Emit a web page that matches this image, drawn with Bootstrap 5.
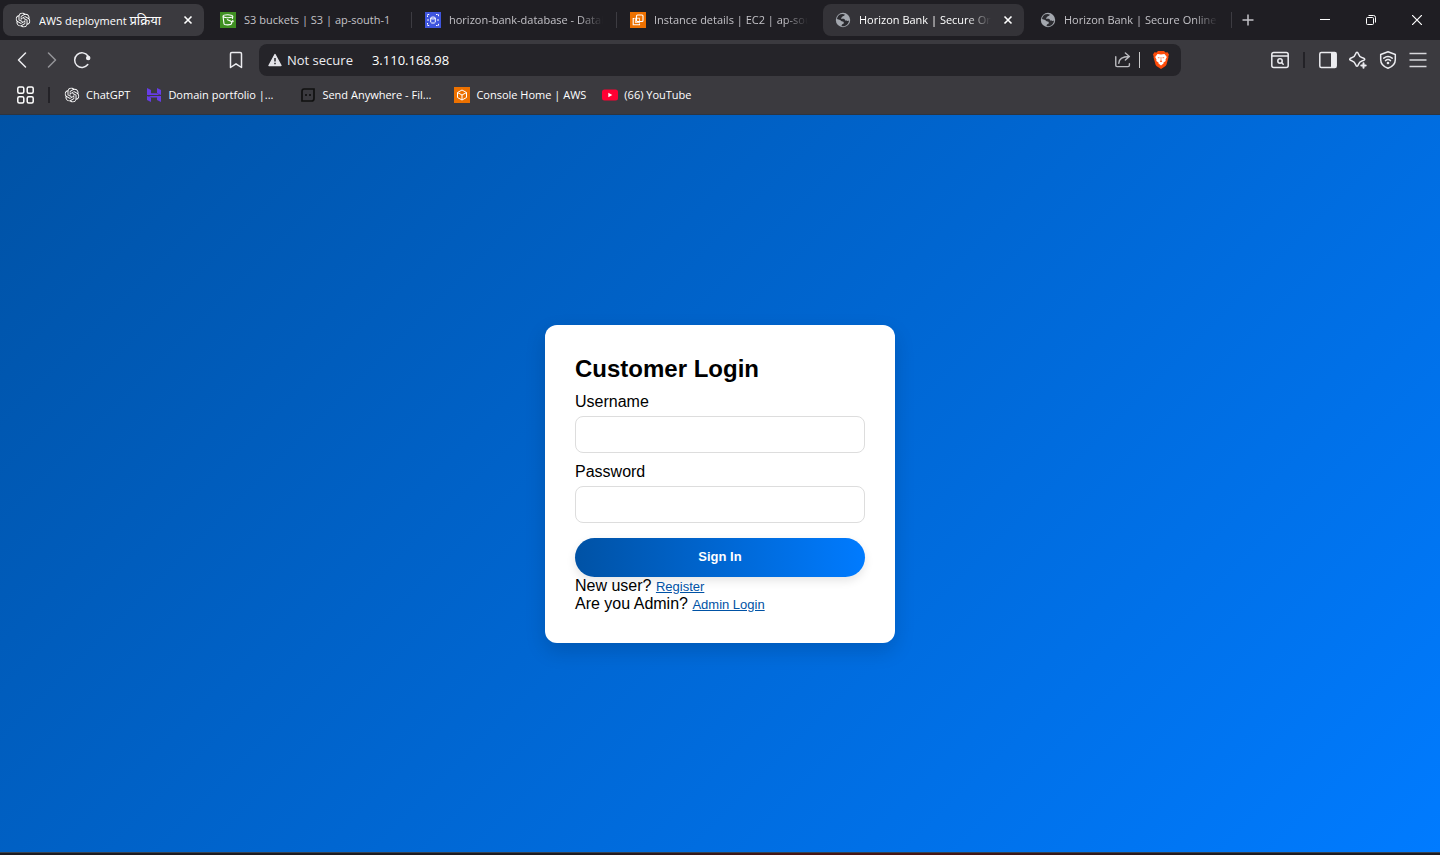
<!DOCTYPE html>
<html lang="en">
<head>
<meta charset="utf-8">
<meta name="viewport" content="width=device-width, initial-scale=1">
<title>Horizon Bank | Secure Online Banking</title>
<link href="https://cdn.jsdelivr.net/npm/bootstrap@5.3.0/dist/css/bootstrap.min.css" rel="stylesheet">
<style>
  body { font-family: "Open Sans", "Noto Sans", "Noto Sans Devanagari", sans-serif; font-size: 11px; line-height: 16px; color: #fff; background: #3b3a3f; }
  button.plain { border: 0; padding: 0; background: none; color: inherit; }
  svg { display: block; flex: none; }
  .line-icon { fill: none; stroke: currentColor; stroke-width: 1.5; stroke-linecap: round; stroke-linejoin: round; }

  .tab-strip { height: 40px; background: #1f1e23; padding-left: 3px; }
  .tab-item { flex: 0 1 201px; min-width: 0; height: 32px; margin: 4px 4px 4px 0; padding: 0 11px 0 12px; border-radius: 8px; color: #c3c2c7; position: relative; }
  .tab-item.lit { background: #3b3a3f; color: #fff; }
  .tab-item.dim-lit { background: #343338; color: #fff; }
  .tab-item.ruled::after { content: ""; position: absolute; right: -3px; top: 8px; width: 1px; height: 16px; background: #3d3c42; }
  .tab-title { white-space: nowrap; overflow: hidden; text-align: left; }
  .tab-title .hindi { font-size: 13px; }
  .faded { -webkit-mask-image: linear-gradient(to right, #000 calc(100% - 24px), transparent); mask-image: linear-gradient(to right, #000 calc(100% - 24px), transparent); }
  .win-btn { width: 46px; height: 40px; }

  .tool-bar { height: 40px; color: #ececf0; }
  .tool-left, .tool-right { flex: 0 0 259px; }
  .tool-left { padding: 0 8px 0 7px; }
  .tool-right { padding-right: 7px; }
  .tool-btn { width: 30px; height: 32px; }
  .rule { width: 2px; height: 16px; background: #232227; }
  .address { height: 32px; border-radius: 8px; background: #252429; padding: 0 12px 0 9px; font-size: 13px; }
  .address label { margin-left: 5px; }
  .address input { border: 0; background: none; color: #fff; outline: 0; padding: 0; min-width: 0; margin-left: 19px; }
  .bookmark-bar { height: 35px; padding: 0 17px 4px; border-bottom: 1px solid #2c3440; }
  .bookmark-bar .rule { margin: 0 14px; }
  .bookmark-bar a { color: #fff; white-space: nowrap; gap: 6px; }
  .bm-fixed { width: 138px; }

  .login-page { background: linear-gradient(135deg, #0052a5, #007bff); font-family: "Liberation Sans", Arial, sans-serif; font-size: 16px; line-height: 18px; color: #000; }
  .login-card { width: 350px; padding: 30px; border-radius: 12px; background: #fff; box-shadow: 0 8px 20px rgba(0, 0, 0, .15); }
  .login-card h2 { font-size: 24px; line-height: 28px; font-weight: 700; margin: 0 0 10px; }
  .login-card label { display: block; }
  .login-card .form-control { height: 37px; margin: 5px 0 10px; border: 1px solid #ddd; border-radius: 8px; }
  .login-card .sign-in { height: 39px; margin-top: 5px; padding: 0; border: 0; font-size: 13px; font-weight: 700; color: #fff; background: linear-gradient(to right, #0052a5, #007bff); box-shadow: 0 4px 10px rgba(0, 0, 0, .1); }
  .login-card a { font-size: 13px; line-height: 1; color: #0052a5; }
  .task-edge { height: 3px; background: linear-gradient(to right, #1c1c22 40%, #451616 55%, #451616 65%, #1c1c22 85%); border-top: 1px solid #38424e; }
</style>
</head>
<body class="d-flex flex-column min-vh-100">

<svg width="0" height="0" class="position-absolute" aria-hidden="true">
  <symbol id="knot" viewBox="0 0 24 24"><path fill="currentColor" d="M22.2819 9.8211a5.9847 5.9847 0 0 0-.5157-4.9108 6.0462 6.0462 0 0 0-6.5098-2.9A6.0651 6.0651 0 0 0 4.9807 4.1818a5.9847 5.9847 0 0 0-3.9977 2.9 6.0462 6.0462 0 0 0 .7427 7.0966 5.98 5.98 0 0 0 .511 4.9107 6.051 6.051 0 0 0 6.5146 2.9001A5.9847 5.9847 0 0 0 13.2599 24a6.0557 6.0557 0 0 0 5.7718-4.2058 5.9894 5.9894 0 0 0 3.9977-2.9001 6.0557 6.0557 0 0 0-.7475-7.0729zm-9.022 12.6081a4.4755 4.4755 0 0 1-2.8764-1.0408l.1419-.0804 4.7783-2.7582a.7948.7948 0 0 0 .3927-.6813v-6.7369l2.02 1.1686a.071.071 0 0 1 .038.052v5.5826a4.504 4.504 0 0 1-4.4945 4.4944zm-9.6607-4.1254a4.4708 4.4708 0 0 1-.5346-3.0137l.142.0852 4.783 2.7582a.7712.7712 0 0 0 .7806 0l5.8428-3.3685v2.3324a.0804.0804 0 0 1-.0332.0615L9.74 19.9502a4.4992 4.4992 0 0 1-6.1408-1.6464zM2.3408 7.8956a4.485 4.485 0 0 1 2.3655-1.9728V11.6a.7664.7664 0 0 0 .3879.6765l5.8144 3.3543-2.0201 1.1685a.0757.0757 0 0 1-.071 0l-4.8303-2.7865A4.504 4.504 0 0 1 2.3408 7.872zm16.5963 3.8558L13.1038 8.364 15.1192 7.2a.0757.0757 0 0 1 .071 0l4.8303 2.7913a4.4944 4.4944 0 0 1-.6765 8.1042v-5.6772a.79.79 0 0 0-.407-.667zm2.0107-3.0231l-.142-.0852-4.7735-2.7818a.7759.7759 0 0 0-.7854 0L9.409 9.2297V6.8974a.0662.0662 0 0 1 .0284-.0615l4.8303-2.7866a4.4992 4.4992 0 0 1 6.6802 4.66zM8.3065 12.863l-2.02-1.1638a.0804.0804 0 0 1-.038-.0567V6.0742a4.4992 4.4992 0 0 1 7.3757-3.4537l-.142.0805L8.704 5.459a.7948.7948 0 0 0-.3927.6813zm1.0976-2.3654l2.602-1.4998 2.6069 1.4998v2.9994l-2.5974 1.4997-2.6067-1.4997Z"/></symbol>
  <symbol id="globe" viewBox="0 0 16 16"><circle cx="8" cy="8" r="7.2" fill="#a3a7ae"/><path fill="#2b2b30" d="M3 4.200C4 2.800 5.500 2.100 7.200 2c1 0 2 .2 2.600.5-.2 1.200-1 1.500-2 1.700-.6.1-.5.9-1.100 1.200-.8.3-.9.900-.3 1.400h2.200c1 0 1.300.8 1.400 1.600h1.200c.7 0 1 .5 1.600.5.5 0 .8-.3 1.300-.4-.2 2.600-2 4.700-4.300 5.400-1 .3-2.200.3-3.200 0 0-1.100.4-1.900 1.300-2 .8-.1 1-.5.9-1.300 0-.9-.6-1.100-1.400-1.200-1 0-1.500-.7-2.200-1.300L2 6.900C2.100 5.900 2.500 5 3 4.200z"/></symbol>
  <symbol id="cross" viewBox="0 0 10 10"><path d="M1.500 1.500l7 7M8.500 1.500l-7 7" stroke="currentColor" stroke-width="1.600" fill="none"/></symbol>
</svg>

<header>
  <div class="tab-strip d-flex">
    <div class="tab-item lit d-flex align-items-center gap-2">
      <svg width="16" height="16" viewBox="-1 -1 26 26"><use href="#knot" width="24" height="24"/></svg>
      <button class="plain tab-title flex-grow-1">AWS deployment <span class="hindi" lang="hi">प्रक्रिया</span></button>
      <button class="plain" aria-label="Close tab"><svg width="10" height="10"><use href="#cross"/></svg></button>
    </div>
    <div class="tab-item ruled d-flex align-items-center gap-2">
      <svg width="16" height="16" viewBox="0 0 16 16"><rect width="16" height="16" fill="#3f8f22"/><g fill="none" stroke="#fff" stroke-width="1.100"><path d="M3 4.300l1 7.400c.2 1.600 7.200 1.600 7.500 0l.4-2.200M3 4.300c0-2 9.800-2 9.800 0l-.4 2.500M3 4.300c1 1.600 6 2 9.500.7"/><path d="M7 7.500l5 2.200c1.500.5 1.400-.8.3-1.500"/></g></svg>
      <button class="plain tab-title flex-grow-1">S3 buckets | S3 | ap-south-1</button>
    </div>
    <div class="tab-item ruled d-flex align-items-center gap-2">
      <svg width="16" height="16" viewBox="0 0 16 16"><rect width="16" height="16" fill="#3f55dd"/><g fill="none" stroke="#fff"><path d="M2.500 5V2.500H5M11 2.500h2.500V5M2.500 11v2.500H5M11 13.500h2.500V11" stroke-dasharray="1.600 .8"/><ellipse cx="8" cy="6" rx="2.300" ry="1"/><path d="M5.700 6v4.200c0 1.200 4.600 1.200 4.600 0V6M2 8h2M12 8h2"/></g></svg>
      <button class="plain tab-title faded flex-grow-1">horizon-bank-database - Databases</button>
    </div>
    <div class="tab-item d-flex align-items-center gap-2">
      <svg width="16" height="16" viewBox="0 0 16 16"><rect width="16" height="16" fill="#ed7100"/><g fill="none" stroke="#fff" stroke-width="1.100"><rect x="6.500" y="3" width="6.500" height="6.500" rx="1"/><path d="M4.500 6.500H3.200v6.300h6.300v-1.300"/><path d="M9.500 6.300H5.500v4.200h4z" opacity=".75"/></g></svg>
      <button class="plain tab-title faded flex-grow-1">Instance details | EC2 | ap-south-1</button>
    </div>
    <div class="tab-item dim-lit d-flex align-items-center gap-2">
      <svg width="16" height="16"><use href="#globe"/></svg>
      <button class="plain tab-title faded flex-grow-1">Horizon Bank | Secure Online</button>
      <button class="plain ms-1" aria-label="Close tab"><svg width="10" height="10"><use href="#cross"/></svg></button>
    </div>
    <div class="tab-item ruled d-flex align-items-center gap-2">
      <svg width="16" height="16"><use href="#globe"/></svg>
      <button class="plain tab-title faded flex-grow-1">Horizon Bank | Secure Online</button>
    </div>
    <button class="plain px-2" aria-label="New tab"><svg width="14" height="14" viewBox="0 0 14 14"><path d="M7 1.500v11M1.500 7h11" stroke="#c3c2c7" stroke-width="1.500"/></svg></button>
    <div class="d-flex ms-auto">
      <button class="plain win-btn d-flex align-items-center justify-content-center" aria-label="Minimize"><svg width="10" height="10" viewBox="0 0 10 10"><path d="M0 4.500h10" stroke="#fff"/></svg></button>
      <button class="plain win-btn d-flex align-items-center justify-content-center" aria-label="Restore"><svg width="10" height="10" viewBox="0 0 10 10" fill="none" stroke="#fff"><rect x=".5" y="2.500" width="7" height="7" rx="1"/><path d="M2.500.5h5a2 2 0 0 1 2 2v5"/></svg></button>
      <button class="plain win-btn d-flex align-items-center justify-content-center" aria-label="Close"><svg width="10" height="10" viewBox="0 0 10 10"><path d="M0 0l10 10M10 0L0 10" stroke="#fff" stroke-width="1.200"/></svg></button>
    </div>
  </div>

  <div class="tool-bar d-flex align-items-center">
    <div class="tool-left d-flex">
      <button class="plain tool-btn d-flex align-items-center justify-content-center" aria-label="Back"><svg class="line-icon" width="18" height="18" viewBox="0 0 18 18"><path d="M12.500 2L5.500 9l7 7"/></svg></button>
      <button class="plain tool-btn d-flex align-items-center justify-content-center opacity-50" aria-label="Forward"><svg class="line-icon" width="18" height="18" viewBox="0 0 18 18"><path d="M5.500 2l7 7-7 7"/></svg></button>
      <button class="plain tool-btn d-flex align-items-center justify-content-center" aria-label="Reload"><svg class="line-icon" width="18" height="18" viewBox="0 0 18 18"><path d="M14.800 13.500A7.300 7.300 0 1 1 15 5"/><circle cx="15.200" cy="7" r="1.500" fill="currentColor"/></svg></button>
      <button class="plain tool-btn d-flex align-items-center justify-content-center ms-auto" aria-label="Bookmark this page"><svg class="line-icon" width="18" height="18" viewBox="0 0 18 18"><path d="M3.500 16.500V2.800c0-.8.500-1.300 1.300-1.300h8.400c.8 0 1.300.5 1.300 1.300v13.700L9 12.800z"/></svg></button>
    </div>
    <div class="address d-flex align-items-center flex-grow-1">
      <svg width="14" height="14" viewBox="0 0 14 14"><path d="M7 1.500L13 12.500H1z" fill="#e3e3e8" stroke="#e3e3e8" stroke-width="1.400" stroke-linejoin="round"/><path d="M7 5v3.500M7 9.800v1.400" stroke="#252429" stroke-width="1.500"/></svg>
      <label for="url" class="text-nowrap">Not secure</label>
      <input id="url" type="text" class="flex-grow-1" value="3.110.168.98">
      <button class="plain" aria-label="Share"><svg class="line-icon opacity-75" width="16" height="18" viewBox="1 0 17 18"><path d="M1.800 5.500v9c0 1 .5 1.500 1.500 1.500h11.500c.9 0 1.500-.5 1.500-1.500V13M5 12.500c.2-4.500 3-7.300 11-7.300M12 1.500l4.300 3.700L12 9"/></svg></button>
      <span class="rule mx-2 opacity-75 border-start border-white"></span>
      <button class="plain ms-1" aria-label="Brave Shields"><svg width="16" height="18" viewBox="0 0 16 18"><path fill="#ff4c0a" d="M5 0h6l1.500 1.500 2-.2L16 3.500l-.7 2 .2.700-2 7.400c-.3.800-.7 1.300-1.300 1.700L8 18l-4.200-2.700c-.6-.4-1-.9-1.300-1.700l-2-7.400.2-.7-.7-2 1.500-2.200 2 .2z"/><path fill="#fff" d="M4.500 3L8 3.500l3.500-.5 2.300 3-1.300 2.500.2 1.400L10.500 11.500v1L8 14.500l-2.500-2v-1L3.300 9.900l.2-1.400L2.200 6z"/><path fill="#ff4c0a" d="M4.500 6.300l2.200.2-.7 1.100zM11.500 6.300l-2.200.2.700 1.100zM7.700 6h.6v3.500l1 .8L8 11.200l-1.300-.9 1-.8z"/></svg></button>
    </div>
    <div class="tool-right d-flex align-items-center justify-content-end">
      <button class="plain tool-btn d-flex align-items-center justify-content-center" aria-label="Search tabs"><svg class="line-icon" width="18" height="18" viewBox="0 0 18 18"><rect x=".8" y="1.500" width="16.400" height="15" rx="2"/><path d="M1 5h16"/><circle cx="9" cy="10" r="2.200"/><path d="M10.800 11.800l1.400 1.400"/></svg></button>
      <span class="rule mx-2"></span>
      <button class="plain tool-btn d-flex align-items-center justify-content-center" aria-label="Sidebar"><svg class="line-icon" width="18" height="18" viewBox="0 0 18 18"><rect x=".8" y="1.500" width="16.400" height="15" rx="1.500"/><path d="M12 2h5v14h-5z" fill="currentColor" stroke="none"/></svg></button>
      <button class="plain tool-btn d-flex align-items-center justify-content-center" aria-label="Leo AI"><svg class="line-icon" width="18" height="18" viewBox="0 0 18 18"><path d="M8 1.200c.8 0 1 .5 1.300 1.500.8 2.700 1.300 3.200 4 4 1 .3 2.500.6 2.500 1.600s-1.500 1.200-2.500 1.500c-2.700.8-3.200 1.300-4 4-.3 1-.5 1.500-1.300 1.500s-1-.5-1.300-1.500c-.8-2.700-1.300-3.200-4-4-1-.3-2-.6-2-1.500s1-1.300 2-1.600c2.700-.8 3.200-1.300 4-4C7 1.700 7.200 1.200 8 1.200z"/><path d="M14.500 12.300v4.400M12.300 14.500h4.400" stroke-width="2"/></svg></button>
      <button class="plain tool-btn d-flex align-items-center justify-content-center" aria-label="VPN"><svg class="line-icon" width="18" height="18" viewBox="0 0 18 18"><path d="M9 .8l7.300 2.700v5.200c0 4-3 7-7.300 8.600-4.300-1.600-7.300-4.600-7.300-8.600V3.500z"/><path d="M4.800 7.200c2.500-2 5.900-2 8.400 0M6.500 9.600c1.500-1.200 3.500-1.200 5 0"/><circle cx="9" cy="12" r=".6" fill="currentColor"/></svg></button>
      <button class="plain tool-btn d-flex align-items-center justify-content-center" aria-label="Menu"><svg width="18" height="18" viewBox="0 0 18 18"><path d="M.5 2.500h17M.5 9h17M.5 15.500h17" stroke="#d8d8dc" stroke-width="1.700"/></svg></button>
    </div>
  </div>

  <nav class="bookmark-bar d-flex align-items-center" aria-label="Bookmarks">
    <button class="plain" aria-label="All bookmarks"><svg class="line-icon" width="17" height="18" viewBox="0 0 17 18"><rect x=".8" y="1" width="6" height="6.200" rx="1.500"/><rect x="10.200" y="1" width="6" height="6.200" rx="1.500"/><rect x=".8" y="10.800" width="6" height="6.200" rx="1.500"/><rect x="10.200" y="10.800" width="6" height="6.200" rx="1.500"/></svg></button>
    <span class="rule"></span>
    <div class="d-flex gap-3">
      <a href="#" class="d-flex align-items-center text-decoration-none"><svg width="16" height="16" viewBox="-1 -1 26 26"><use href="#knot" width="24" height="24"/></svg>ChatGPT</a>
      <a href="#" class="bm-fixed d-flex align-items-center text-decoration-none"><svg width="16" height="16" viewBox="0 0 16 16"><path fill="#673de6" d="M1 1l4 2v3.300h5.500l3 1.700H1zM11 1l4 2v5l-4-1.700zM2.500 9H15v6l-4-2v-2.500H5.500zM1 9l4 1.500V15l-4-2z"/></svg>Domain portfolio |...</a>
      <a href="#" class="bm-fixed d-flex align-items-center text-decoration-none"><svg width="16" height="16" viewBox="0 0 16 16"><path d="M4 2h10v9.500c0 1.500-.7 2.500-2.500 2.500H2V4.500C2 3 2.500 2 4 2z" fill="none" stroke="#111" stroke-width="1.700"/><path d="M6 7v2M10 7v2" stroke="#111" stroke-width="1.700"/></svg>Send Anywhere - Fil...</a>
      <a href="#" class="d-flex align-items-center text-decoration-none"><svg width="16" height="16" viewBox="0 0 16 16"><rect width="16" height="16" fill="#ed7100"/><path d="M8 3l4.500 2.500v5L8 13l-4.500-2.500v-5zM3.500 5.500L8 8l4.500-2.500M8 8v5" fill="none" stroke="#fff" stroke-linejoin="round"/></svg>Console Home | AWS</a>
      <a href="#" class="d-flex align-items-center text-decoration-none"><svg width="16" height="16" viewBox="0 0 16 16"><rect y="2.500" width="16" height="11" rx="2.500" fill="#ff0033"/><path d="M6.300 5.700v4.600L10.300 8z" fill="#fff"/></svg>(66) YouTube</a>
    </div>
  </nav>
</header>

<main class="login-page flex-grow-1 d-flex align-items-center justify-content-center">
  <form class="login-card">
    <h2>Customer Login</h2>
    <label for="username">Username</label>
    <input id="username" type="text" class="form-control">
    <label for="password">Password</label>
    <input id="password" type="password" class="form-control">
    <button type="button" class="sign-in btn rounded-pill w-100">Sign In</button>
    <div>New user? <a href="#">Register</a></div>
    <div>Are you Admin? <a href="#">Admin Login</a></div>
  </form>
</main>
<footer class="task-edge"></footer>

<script src="https://cdn.jsdelivr.net/npm/bootstrap@5.3.0/dist/js/bootstrap.bundle.min.js"></script>
</body>
</html>
